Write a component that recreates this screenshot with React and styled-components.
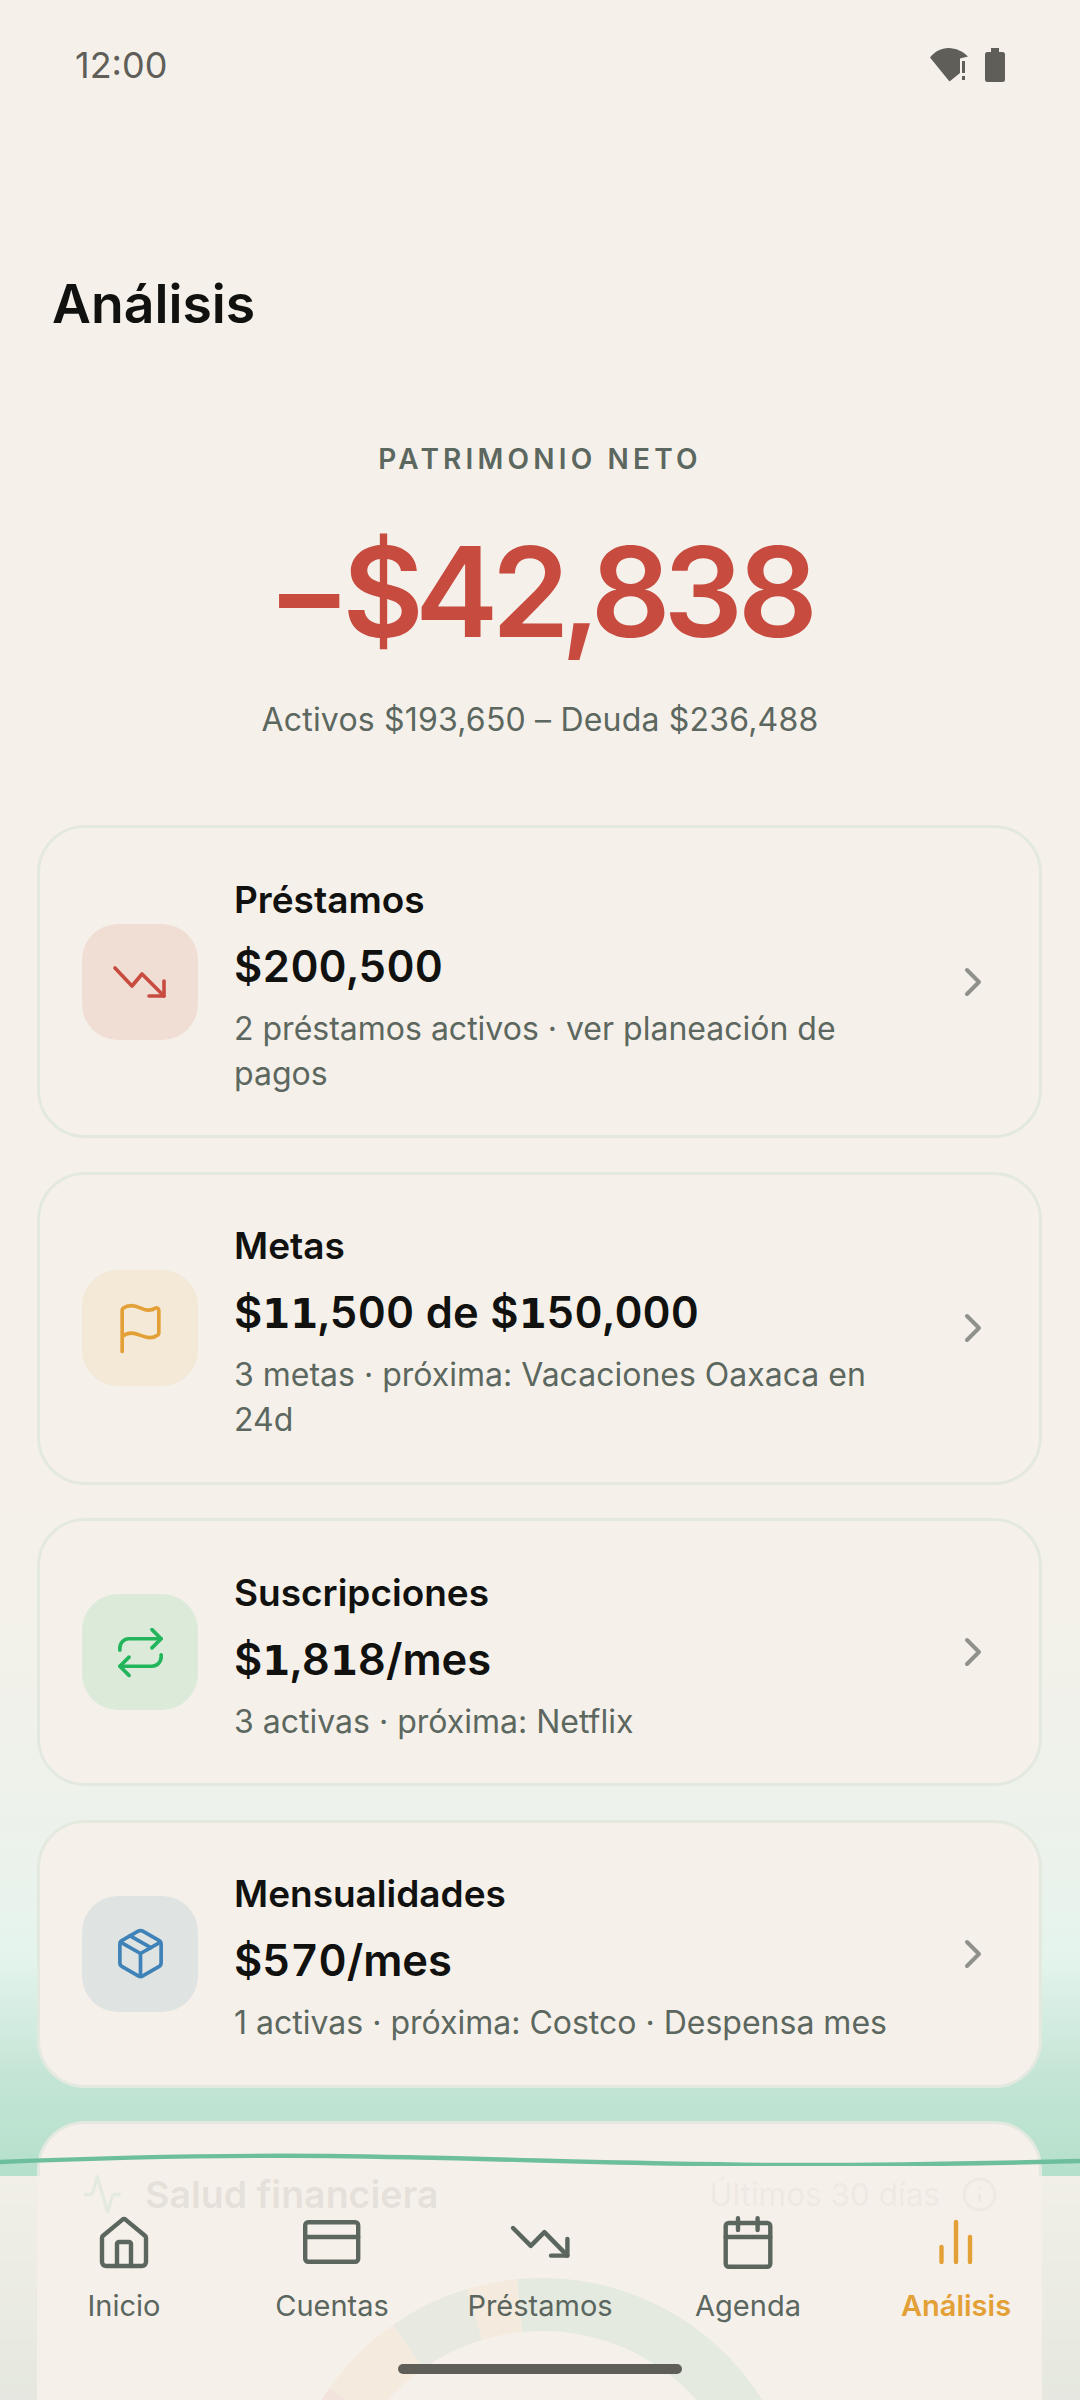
import React from 'react'
import styled, { createGlobalStyle } from 'styled-components'
import { Flag, Repeat, Package, ChevronRight, Activity, Info } from 'lucide-react'

const GlobalStyle = createGlobalStyle`
    html, body {
        margin: 0;
        padding: 0;
        background: #f5f1ea;
    }
    * {
        box-sizing: border-box;
    }
`

const Screen = styled.div`
    position: relative;
    width: 1080px;
    height: 2400px;
    overflow: hidden;
    background: #f5f1ea;
    color: #111210;
    font-family: Inter, "Liberation Sans", sans-serif;
`

/* green glow that rises from behind the tab bar */
const Glow = styled.div`
    position: absolute;
    left: 0;
    right: 0;
    bottom: 0;
    height: 900px;
    background: linear-gradient(
        to bottom,
        #f5f1ea 0%,
        #f2f1ea 18%,
        #edf2eb 33%,
        #ebf2ec 41%,
        #e4f4ed 51%,
        #c4e5d6 64%,
        #b5e0cb 75%,
        #1a8060 100%
    );
`

const Content = styled.div`
    position: relative;
    z-index: 1;
`

const StatusBar = styled.div`
    display: flex;
    align-items: center;
    justify-content: space-between;
    height: 130px;
    padding: 0 75px;
    color: #5f5e58;
`

const Time = styled.span`
    font-size: 36px;
`

const StatusIcons = styled.div`
    display: flex;
    align-items: center;
    gap: 13px;
`

const Title = styled.h1`
    margin: 142px 0 0 52px;
    font-size: 53.5px;
    line-height: 64px;
    font-weight: 600;
`

const Hero = styled.section`
    margin-top: 106px;
    text-align: center;
`

const HeroLabel = styled.div`
    font-size: 28px;
    line-height: 34px;
    font-weight: 600;
    letter-spacing: 4.2px;
    color: #5c675f;
`

const HeroAmount = styled.div`
    margin-top: 46px;
    font-size: 125px;
    line-height: 140px;
    font-weight: 600;
    letter-spacing: -7.2px;
    color: #c84b3f;
    font-feature-settings: "tnum";
`

const HeroSub = styled.div`
    margin-top: 36px;
    font-size: 32px;
    line-height: 44px;
    letter-spacing: 0.19px;
    color: #5c675f;
`

const CardList = styled.div`
    display: flex;
    flex-direction: column;
    gap: 33.5px;
    margin: 83px 38px 0 37px;
`

const Card = styled.article`
    display: flex;
    align-items: center;
    gap: 36px;
    padding: 39.5px 42px;
    background: #f5f1ea;
    border: 3px solid #e4e9df;
    border-radius: 48px;
`

const Tile = styled.div`
    flex: none;
    display: flex;
    align-items: center;
    justify-content: center;
    width: 116px;
    height: 116px;
    border-radius: 36px;
    background: ${props => props.$bg};
    color: ${props => props.$fg};
`

const CardBody = styled.div`
    flex: 1;
    min-width: 0;
    padding-top: 7px;
`

const CardTitle = styled.div`
    font-size: 37px;
    line-height: 50px;
    font-weight: 600;
`

const CardValue = styled.div`
    margin-top: 12px;
    font-size: 43.5px;
    line-height: 58px;
    font-weight: 600;
    font-feature-settings: "tnum";
`

// the app's number font has a footed 1
const SlabOne = styled.span`
    font-family: "DejaVu Sans", sans-serif;
    font-weight: 700;
    font-size: 0.92em;
    line-height: 1;
`

const CardSub = styled.div`
    margin-top: 11px;
    font-size: 32px;
    line-height: 45px;
    color: #5c675f;
`

const Chevron = styled(ChevronRight)`
    flex: none;
    color: #8f918a;
`

const HealthCard = styled(Card)`
    display: block;
    height: 600px;
    padding: 47px 41px 0 42px;
`

const HealthHeader = styled.div`
    display: flex;
    align-items: center;
    height: 46px;
`

const HealthIcon = styled(Activity)`
    flex: none;
    color: #119a69;
`

const HealthTitle = styled.div`
    margin-left: 22px;
    font-size: 37.5px;
    font-weight: 600;
    color: #111210;
`

const HealthRange = styled.div`
    margin-left: auto;
    font-size: 31.5px;
    color: #8f918a;
`

const HealthInfo = styled(Info)`
    flex: none;
    margin-left: 21px;
    color: #8f918a;
`

const Gauge = styled.svg`
    display: block;
    margin: 61px auto 0;
`

const Wave = styled.svg`
    position: absolute;
    left: 0;
    bottom: 234px;
    z-index: 3;
`

const TabBar = styled.nav`
    position: absolute;
    left: 0;
    right: 0;
    bottom: 0;
    z-index: 2;
    display: grid;
    grid-template-columns: repeat(5, 1fr);
    height: 224px;
    padding: 34px 20px 0;
    background: rgba(245, 240, 233, 0.93);
`

const Tab = styled.div`
    display: flex;
    flex-direction: column;
    align-items: center;
    color: ${props => (props.$active ? '#e3a036' : '#5a665e')};
`

const TabIcon = styled.svg`
    display: block;
    fill: none;
    stroke: currentColor;
    stroke-width: 4.4;
    stroke-linecap: round;
    stroke-linejoin: round;
`

const TabLabel = styled.span`
    margin-top: 13px;
    font-size: 29px;
    line-height: 38px;
    font-weight: ${props => (props.$active ? 600 : 400)};
`

const HomeBar = styled.div`
    position: absolute;
    left: 398px;
    bottom: 26px;
    z-index: 4;
    width: 284px;
    height: 10px;
    border-radius: 5px;
    background: #5f5e58;
`

const WifiIcon = () => (
    <svg width="42" height="34" viewBox="0 0 42 34" fill="#5f5e58">
        <path d="M0 9.5C5 3.5 11 0 18.5 0S33 3.5 38 8.5L30 10.500V25L19.500 33.500Z" />
        <rect x="32" y="13" width="3" height="12" />
        <rect x="32" y="28" width="3" height="4" />
    </svg>
)

const BatteryIcon = () => (
    <svg width="20" height="34" viewBox="0 0 20 34" fill="#5f5e58">
        <path d="M6 0H14V4H17.500A2.500 2.500 0 0 1 20 6.500V31.500A2.500 2.500 0 0 1 17.500 34H2.500A2.500 2.500 0 0 1 0 31.500V6.500A2.500 2.500 0 0 1 2.500 4H6Z" />
    </svg>
)

const TrendIcon = () => (
    <svg width="56" height="36" viewBox="0 0 56 36" fill="none" stroke="currentColor" strokeWidth="3.6" strokeLinecap="round" strokeLinejoin="round">
        <path d="M3 4L20 22L30 10L52 32" />
        <path d="M37 32H52V17" />
    </svg>
)

const HomeGlyph = () => (
    <TabIcon width="64" height="64" viewBox="0 0 64 64">
        <path d="M10 28a3 3 0 0 1 1-2.300L30.500 9.600a2.500 2.500 0 0 1 3 0L53 25.700a3 3 0 0 1 1 2.300V52a4 4 0 0 1-4 4H14a4 4 0 0 1-4-4Z" />
        <path d="M25 56V34a2 2 0 0 1 2-2H37a2 2 0 0 1 2 2V56" />
    </TabIcon>
)

const CardGlyph = () => (
    <TabIcon width="64" height="64" viewBox="0 0 64 64">
        <rect x="5.200" y="12.200" width="53" height="39.600" rx="3" />
        <path d="M5.200 27H58.200" />
    </TabIcon>
)

const LoanGlyph = () => (
    <TabIcon width="64" height="64" viewBox="0 0 64 64">
        <path d="M5 18L22.800 35.900L36.400 22.100L59.400 45.600" />
        <path d="M43 45.600H59.400V29" />
    </TabIcon>
)

const CalendarGlyph = () => (
    <TabIcon width="64" height="64" viewBox="0 0 64 64">
        <rect x="9.700" y="13" width="44.600" height="43.800" rx="3" />
        <path d="M9.700 27H54.300M22 8.200V20M41.600 8.200V20" />
    </TabIcon>
)

const BarsGlyph = () => (
    <TabIcon width="64" height="64" viewBox="0 0 64 64">
        <path d="M17.500 37V52M32 12V52M46 27V52" />
    </TabIcon>
)

const summaryCards = [
    {
        title: 'Préstamos',
        value: '$200,500',
        sub: '2 préstamos activos · ver planeación de pagos',
        bg: '#f0ddd4',
        fg: '#c84b3f',
        icon: <TrendIcon />,
    },
    {
        title: 'Metas',
        value: '$11,500 de $150,000',
        sub: '3 metas · próxima: Vacaciones Oaxaca en 24d',
        bg: '#f4e9d6',
        fg: '#e3a036',
        icon: <Flag size={55} strokeWidth={1.6} />,
    },
    {
        title: 'Suscripciones',
        value: '$1,818/mes',
        sub: '3 activas · próxima: Netflix',
        bg: '#dceada',
        fg: '#22b55c',
        icon: <Repeat size={55} strokeWidth={1.6} />,
    },
    {
        title: 'Mensualidades',
        value: '$570/mes',
        sub: '1 activas · próxima: Costco · Despensa mes',
        bg: '#dfe3e1',
        fg: '#3f82b8',
        icon: <Package size={55} strokeWidth={1.6} />,
    },
]

const tabs = [
    { label: 'Inicio', glyph: <HomeGlyph /> },
    { label: 'Cuentas', glyph: <CardGlyph /> },
    { label: 'Préstamos', glyph: <LoanGlyph /> },
    { label: 'Agenda', glyph: <CalendarGlyph /> },
    { label: 'Análisis', glyph: <BarsGlyph />, active: true },
]

// angles are degrees from the top of the ring, negative to the left
const gaugeSegments = [
    { from: -90, to: -54.7, color: '#c84b3f' },
    { from: -54.7, to: -35, color: '#e3a036' },
    { from: -35, to: -16.8, color: '#3f8a6a' },
    { from: -16.8, to: -5.5, color: '#e3a036' },
    { from: -5.5, to: 90, color: '#119a69' },
]

const RING_CX = 460
const RING_CY = 260
const RING_R = 233.5

const polar = deg => {
    const rad = (deg * Math.PI) / 180
    return `${RING_CX + RING_R * Math.sin(rad)} ${RING_CY - RING_R * Math.cos(rad)}`
}

const withSlabOnes = value =>
    value.split(/(1)/).map((part, i) => (part === '1' ? <SlabOne key={i}>1</SlabOne> : part))

export default function App() {
    return (
        <Screen>
            <GlobalStyle />
            <Glow />
            <Content>
                <StatusBar>
                    <Time>12:00</Time>
                    <StatusIcons>
                        <WifiIcon />
                        <BatteryIcon />
                    </StatusIcons>
                </StatusBar>

                <Title>Análisis</Title>

                <Hero>
                    <HeroLabel>PATRIMONIO NETO</HeroLabel>
                    <HeroAmount>−$42,838</HeroAmount>
                    <HeroSub>Activos $193,650 – Deuda $236,488</HeroSub>
                </Hero>

                <CardList>
                    {summaryCards.map(card => (
                        <Card key={card.title}>
                            <Tile $bg={card.bg} $fg={card.fg}>{card.icon}</Tile>
                            <CardBody>
                                <CardTitle>{card.title}</CardTitle>
                                <CardValue>{withSlabOnes(card.value)}</CardValue>
                                <CardSub>{card.sub}</CardSub>
                            </CardBody>
                            <Chevron size={48} strokeWidth={2} />
                        </Card>
                    ))}

                    <HealthCard>
                        <HealthHeader>
                            <HealthIcon size={41} strokeWidth={2} />
                            <HealthTitle>Salud financiera</HealthTitle>
                            <HealthRange>Últimos 30 días</HealthRange>
                            <HealthInfo size={37} strokeWidth={2} />
                        </HealthHeader>
                        <Gauge width="920" height="300" viewBox="0 0 920 300" fill="none" strokeWidth="53">
                            {gaugeSegments.map(seg => (
                                <path
                                    key={seg.from}
                                    d={`M${polar(seg.from)}A${RING_R} ${RING_R} 0 0 1 ${polar(seg.to)}`}
                                    stroke={seg.color}
                                />
                            ))}
                        </Gauge>
                    </HealthCard>
                </CardList>
            </Content>

            <Wave width="1080" height="20" viewBox="0 0 1080 20" fill="none" stroke="#6dbf9c" strokeWidth="4.4">
                <path d="M0 16C120 11 220 9 330 10C500 12 640 19 800 19C900 19 1000 17 1080 15" />
            </Wave>

            <TabBar>
                {tabs.map(tab => (
                    <Tab key={tab.label} $active={tab.active}>
                        {tab.glyph}
                        <TabLabel $active={tab.active}>{tab.label}</TabLabel>
                    </Tab>
                ))}
            </TabBar>
            <HomeBar />
        </Screen>
    )
}
